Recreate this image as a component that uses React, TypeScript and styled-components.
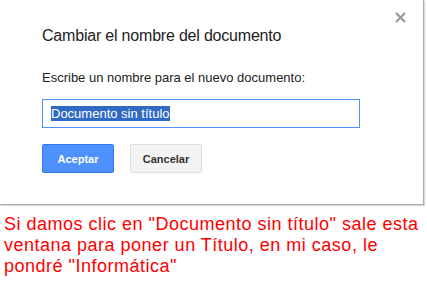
import React from "react";
import styled, { createGlobalStyle } from "styled-components";

const GlobalStyle = createGlobalStyle`
  html, body {
    margin: 0;
    padding: 0;
    background: #fff;
    font-family: Arial, "Liberation Sans", sans-serif;
  }
`;

const Dialog = styled.div`
  position: relative;
  width: 424px;
  height: 205px;
  box-sizing: border-box;
  background: #fff;
  border-right: 1px solid #acacac;
  border-bottom: 1px solid #acacac;
  box-shadow: 1px 1px 1px rgba(0, 0, 0, 0.15);
  padding: 26px 0 0 42px;
  display: flex;
  flex-direction: column;
`;

const Close = styled.button`
  position: absolute;
  top: 11px;
  right: 16px;
  width: 13px;
  height: 13px;
  padding: 0;
  border: none;
  background: none;
  display: flex;
  align-items: center;
  justify-content: center;
`;

const Title = styled.h1`
  margin: 0;
  font-size: 16px;
  line-height: 20px;
  letter-spacing: -0.2px;
  font-weight: normal;
  color: #222;
`;

const Label = styled.p`
  margin: 24px 0 0;
  font-size: 13px;
  line-height: 16px;
  color: #222;
`;

const Field = styled.div`
  margin-top: 13px;
  width: 318px;
  height: 29px;
  box-sizing: border-box;
  border: 1px solid #4d90fe;
  padding: 0 8px;
  display: flex;
  align-items: center;
`;

const Selected = styled.span`
  background: #316ac5;
  color: #fff;
  font-size: 13px;
  line-height: 15px;
`;

const Actions = styled.div`
  margin-top: 16px;
  display: flex;
  gap: 16px;
`;

const Button = styled.button<{ $primary?: boolean }>`
  width: 72px;
  height: 29px;
  box-sizing: border-box;
  border-radius: 2px;
  font-family: Arial, "Liberation Sans", sans-serif;
  font-size: 11px;
  font-weight: bold;
  padding: 0;
  border: 1px solid ${p => (p.$primary ? "#3079ed" : "#dcdcdc")};
  background: ${p => (p.$primary ? "#4d90fe" : "#f3f3f3")};
  color: ${p => (p.$primary ? "#fff" : "#333")};
`;

const Note = styled.p`
  margin: 9px 0 0 4px;
  width: 418px;
  font-size: 18px;
  letter-spacing: 0.5px;
  line-height: normal;
  color: #ff0000;
`;

export default function App() {
  return (
    <>
      <GlobalStyle />
      <Dialog>
        <Close aria-label="Cerrar">
          <svg width="11" height="11" viewBox="0 0 11 11">
            <path d="M1 1 L10 10 M10 1 L1 10" stroke="#9a9a9a" strokeWidth="2.2" />
          </svg>
        </Close>
        <Title>Cambiar el nombre del documento</Title>
        <Label>Escribe un nombre para el nuevo documento:</Label>
        <Field>
          <Selected>Documento sin título</Selected>
        </Field>
        <Actions>
          <Button $primary>Aceptar</Button>
          <Button>Cancelar</Button>
        </Actions>
      </Dialog>
      <Note>
        Si damos clic en "Documento sin título" sale esta ventana para poner un Título, en mi caso, le pondré "Informática"
      </Note>
    </>
  );
}
